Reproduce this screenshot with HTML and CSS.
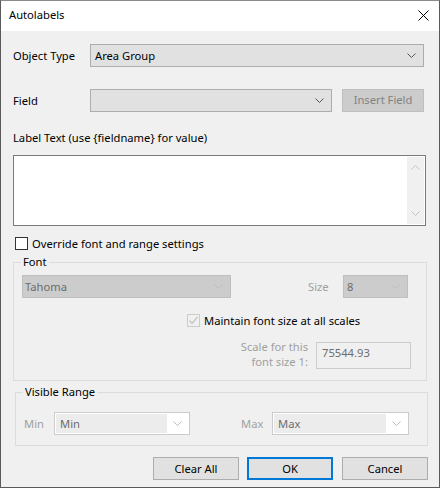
FILE: index.html
```html
<!DOCTYPE html>
<html>
<head>
<meta charset="utf-8">
<link rel="stylesheet" href="styles.css">
</head>
<body>
<div class="window">
  <div class="titlebar">
    <span class="title">Autolabels</span>
    <svg class="close" width="11" height="11" viewBox="0 0 11 11"><path d="M0.5 0.5 L10.5 10.5 M10.5 0.5 L0.5 10.5" stroke="#000" stroke-width="1" fill="none"/></svg>
  </div>
  <div class="content">
    <div class="row row-type">
      <span class="lbl">Object Type</span>
      <div class="combo combo-type"><span class="val">Area Group</span><svg class="chev" width="9" height="5" viewBox="0 0 9 5"><path d="M0.5 0.5 L4.5 4.5 L8.5 0.5" stroke="#555" fill="none"/></svg></div>
    </div>
    <div class="row row-field">
      <span class="lbl">Field</span>
      <div class="combo combo-field"><span class="val"></span><svg class="chev" width="9" height="5" viewBox="0 0 9 5"><path d="M0.5 0.5 L4.5 4.5 L8.5 0.5" stroke="#555" fill="none"/></svg></div>
      <div class="btn btn-disabled btn-insert">Insert Field</div>
    </div>
    <div class="lbl-text">Label Text (use {fieldname} for value)</div>
    <div class="textarea">
      <div class="scroll">
        <svg width="9" height="5" viewBox="0 0 9 5"><path d="M0.5 4.5 L4.5 0.5 L8.5 4.5" stroke="#c2c2c2" fill="none"/></svg>
        <svg width="9" height="5" viewBox="0 0 9 5"><path d="M0.5 0.5 L4.5 4.5 L8.5 0.5" stroke="#c2c2c2" fill="none"/></svg>
      </div>
    </div>
    <div class="check-row">
      <span class="cb"></span>
      <span>Override font and range settings</span>
    </div>
    <div class="group group-font">
      <span class="legend">Font</span>
      <div class="font-row">
        <div class="combo combo-dis combo-tahoma"><span class="val">Tahoma</span><svg class="chev" width="9" height="5" viewBox="0 0 9 5"><path d="M0.5 0.5 L4.5 4.5 L8.5 0.5" stroke="#bdbdbd" fill="none"/></svg></div>
        <span class="dis-lbl size-lbl">Size</span>
        <div class="combo combo-dis combo-size"><span class="val">8</span><svg class="chev" width="9" height="5" viewBox="0 0 9 5"><path d="M0.5 0.5 L4.5 4.5 L8.5 0.5" stroke="#bdbdbd" fill="none"/></svg></div>
      </div>
      <div class="maintain-row">
        <span class="cb cb-dis"><svg width="11" height="11" viewBox="0 0 11 11"><path d="M1.5 5.5 L4 8.5 L9.5 2" stroke="#c4c4c4" stroke-width="1.2" fill="none"/></svg></span>
        <span>Maintain font size at all scales</span>
      </div>
      <div class="scale-row">
        <div class="dis-lbl scale-lbl"><span class="ln">Scale for this</span><span class="ln">font size 1:</span></div>
        <div class="textbox-dis">75544.93</div>
      </div>
    </div>
    <div class="group group-range">
      <span class="legend">Visible Range</span>
      <div class="range-row">
        <span class="dis-lbl min-lbl">Min</span>
        <div class="ecombo ecombo-min"><span class="eval">Min</span><svg class="chev" width="9" height="5" viewBox="0 0 9 5"><path d="M0.5 0.5 L4.5 4.5 L8.5 0.5" stroke="#bdbdbd" fill="none"/></svg></div>
        <span class="dis-lbl max-lbl">Max</span>
        <div class="ecombo ecombo-max"><span class="eval">Max</span><svg class="chev" width="9" height="5" viewBox="0 0 9 5"><path d="M0.5 0.5 L4.5 4.5 L8.5 0.5" stroke="#bdbdbd" fill="none"/></svg></div>
      </div>
    </div>
    <div class="buttons">
      <div class="btn">Clear All</div>
      <div class="btn btn-ok">OK</div>
      <div class="btn btn-cancel">Cancel</div>
    </div>
  </div>
</div>
</body>
</html>
```
FILE: styles.css
```css
* { box-sizing: border-box; }
html, body { margin: 0; padding: 0; }
body {
  font-family: "Noto Sans", "Open Sans", sans-serif;
  font-size: 11.2px;
  color: #000;
  background: #f0f0f0;
}
.window {
  width: 440px;
  height: 488px;
  border: 1px solid #5a5a5a;
  border-top-color: #8a8a8a;
  background: #f0f0f0;
  display: flex;
  flex-direction: column;
}
.titlebar {
  height: 30px;
  background: #fff;
  display: flex;
  align-items: center;
  justify-content: space-between;
  padding: 0 10px 0 8px;
  flex: none;
}
.title { line-height: 16px; margin-top: -2px; }
.close { margin-top: -1px; }
.content {
  padding: 13px 0 0 12px;
  display: flex;
  flex-direction: column;
}
.row {
  display: flex;
  align-items: center;
  height: 23px;
}
.lbl { width: 77px; flex: none; line-height: 16px; }
.combo {
  height: 23px;
  background: #e1e1e1;
  border: 1px solid #adadad;
  display: flex;
  align-items: center;
  justify-content: space-between;
  padding: 0 7px 0 4px;
  flex: none;
}
.combo .val { line-height: 16px; }
.combo-type { width: 334px; }
.row-field { margin-top: 22px; }
.combo-field { width: 242px; }
.btn {
  height: 23px;
  width: 86px;
  background: #e1e1e1;
  border: 1px solid #adadad;
  display: flex;
  align-items: center;
  justify-content: center;
  line-height: 16px;
  flex: none;
}
.btn-disabled {
  background: #cccccc;
  border-color: #bfbfbf;
  color: #838383;
}
.btn-insert { width: 82px; margin-left: 10px; margin-top: -1px; }
.lbl-text { margin-top: 18px; line-height: 16px; height: 16px; }
.textarea {
  margin-top: 9px;
  width: 413px;
  height: 71px;
  background: #fff;
  border: 1px solid #7a7a7a;
  display: flex;
  justify-content: flex-end;
  padding: 1px;
}
.scroll {
  width: 17px;
  background: #f0f0f0;
  display: flex;
  flex-direction: column;
  justify-content: space-between;
  align-items: center;
  padding: 8px 0 8px;
}
.check-row {
  margin-top: 11px;
  display: flex;
  align-items: center;
  height: 13px;
  padding-left: 2px;
}
.check-row span:last-child { margin-left: 4px; line-height: 16px; }
.cb {
  width: 13px;
  height: 13px;
  border: 1px solid #333;
  background: #fff;
  flex: none;
  display: flex;
  align-items: center;
  justify-content: center;
}
.cb-dis { border-color: #cccccc; background: #f0f0f0; }
.group {
  position: relative;
  border: 1px solid #dcdcdc;
  width: 414px;
}
.legend {
  position: absolute;
  top: -9px;
  left: 7px;
  padding: 0 2px;
  background: #f0f0f0;
  line-height: 16px;
}
.group-font {
  margin-top: 12px;
  height: 119px;
  padding: 12px 0 0 8px;
}
.font-row { display: flex; align-items: center; height: 23px; }
.combo-dis {
  background: #cccccc;
  border-color: #bfbfbf;
  color: #6d6d6d;
}
.combo-tahoma { width: 209px; padding-left: 2px; }
.dis-lbl { color: #a0a0a0; line-height: 16px; }
.size-lbl { margin-left: 77px; width: 35px; }
.combo-size { width: 65px; padding-left: 3px; }
.maintain-row {
  margin-top: 16px;
  margin-left: 165px;
  display: flex;
  align-items: center;
  height: 13px;
}
.maintain-row span:last-child { margin-left: 4px; line-height: 16px; }
.scale-row {
  margin-top: 15px;
  display: flex;
  align-items: center;
  margin-left: 193px;
}
.scale-lbl {
  width: 93px;
  display: flex;
  flex-direction: column;
  align-items: flex-end;
  margin-top: -3px;
}
.scale-lbl .ln { line-height: 15px; height: 15px; }
.textbox-dis {
  margin-left: 8px;
  width: 95px;
  height: 27px;
  border: 1px solid #cccccc;
  background: #f0f0f0;
  color: #6d6d6d;
  padding: 2px 0 0 5px;
  line-height: 16px;
}
.group-range {
  margin-top: 11px;
  margin-left: 2px;
  width: 413px;
  height: 54px;
  padding: 19px 0 0 8px;
}
.range-row { display: flex; align-items: center; height: 23px; }
.min-lbl { width: 30px; }
.max-lbl { width: 31px; margin-left: 51px; }
.ecombo {
  height: 23px;
  border: 1px solid #cccccc;
  background: #fff;
  padding: 1px;
  display: flex;
  align-items: stretch;
  flex: none;
}
.eval {
  flex: 1;
  background: #ececec;
  color: #6d6d6d;
  padding-left: 4px;
  line-height: 19px;
}
.ecombo .chev { align-self: center; margin: 0 6px 0 6px; }
.ecombo-min { width: 136px; }
.ecombo-max { width: 137px; }
.buttons {
  margin-top: 11px;
  display: flex;
  gap: 8px;
  padding-left: 140px;
}
.btn-ok { border: 2px solid #0078d7; }
.btn-cancel { margin-left: 1px; }
```
